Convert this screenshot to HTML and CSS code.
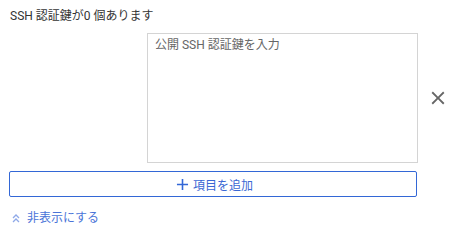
FILE: index.html
```html
<!DOCTYPE html>
<html lang="ja">
<head>
    <meta charset="UTF-8">
    <meta name="viewport" content="width=device-width, initial-scale=1.0">
    <title>SSH 認証鍵</title>
    <link rel="stylesheet" href="styles.css">
</head>
<body>

<div class="ssh-keys">
    <div class="ssh-title">SSH 認証鍵が0 個あります</div>

    <div class="key-row">
        <div class="key-label"></div>
        <textarea class="key-input" placeholder="公開 SSH 認証鍵を入力"></textarea>
        <button class="key-remove" type="button" aria-label="削除">
            <svg width="22" height="22" viewBox="0 0 24 24"><path d="M19 6.41L17.59 5 12 10.59 6.41 5 5 6.41 10.59 12 5 17.59 6.41 19 12 13.41 17.59 19 19 17.59 13.41 12z"/></svg>
        </button>
    </div>

    <button class="add-item" type="button">
        <svg width="19" height="19" viewBox="0 0 24 24"><path d="M19 13h-6v6h-2v-6H5v-2h6V5h2v6h6v2z"/></svg>
        <span>項目を追加</span>
    </button>

    <a class="toggle-link" href="#">
        <svg width="8" height="10" viewBox="0 0 8 10"><polyline points="1,5 4,2 7,5"/><polyline points="1,9 4,6 7,9"/></svg>
        <span>非表示にする</span>
    </a>
</div>

</body>
</html>
```

FILE: styles.css
```css
body {
    margin: 0;
    padding: 0;
    background-color: #fff;
    font-family: Roboto, "Noto Sans CJK JP", sans-serif;
    font-size: 12px;
    color: #333;
}
.ssh-keys {
    width: 408px;
    padding: 7px 0 0 9px;
}
.ssh-title {
    line-height: 18px;
    padding-left: 1px;
}
.key-row {
    display: flex;
    align-items: center;
    margin-top: 8px;
    width: 450px;
}
.key-label {
    width: 138px;
    flex-shrink: 0;
}
.key-input {
    width: 271px;
    height: 130px;
    box-sizing: border-box;
    margin: 0;
    padding: 3px 7px;
    border: 1px solid #d4d4d4;
    resize: none;
    font-family: Roboto, "Noto Sans CJK JP", sans-serif;
    font-size: 12px;
    line-height: 16px;
    color: #333;
    flex-shrink: 0;
}
.key-input::placeholder {
    color: #666;
}
.key-remove {
    margin-left: 9px;
    padding: 0;
    border: none;
    background: none;
    width: 22px;
    height: 22px;
    cursor: pointer;
}
.key-remove svg {
    display: block;
    fill: #666;
}
.add-item {
    display: flex;
    align-items: center;
    justify-content: center;
    gap: 1px;
    width: 408px;
    height: 26px;
    margin-top: 8px;
    padding: 0;
    border: 1px solid #3367d6;
    border-radius: 2px;
    background: #fff;
    color: #3b68d4;
    font-family: Roboto, "Noto Sans CJK JP", sans-serif;
    font-size: 12px;
    cursor: pointer;
}
.add-item svg {
    fill: #3367d6;
}
.toggle-link {
    display: flex;
    align-items: center;
    gap: 7px;
    margin-top: 12px;
    padding-left: 3px;
    line-height: 18px;
    color: #4a74d8;
    text-decoration: none;
}
.toggle-link svg {
    fill: none;
    stroke: #8fa9e8;
    stroke-width: 1.3;
}
```
